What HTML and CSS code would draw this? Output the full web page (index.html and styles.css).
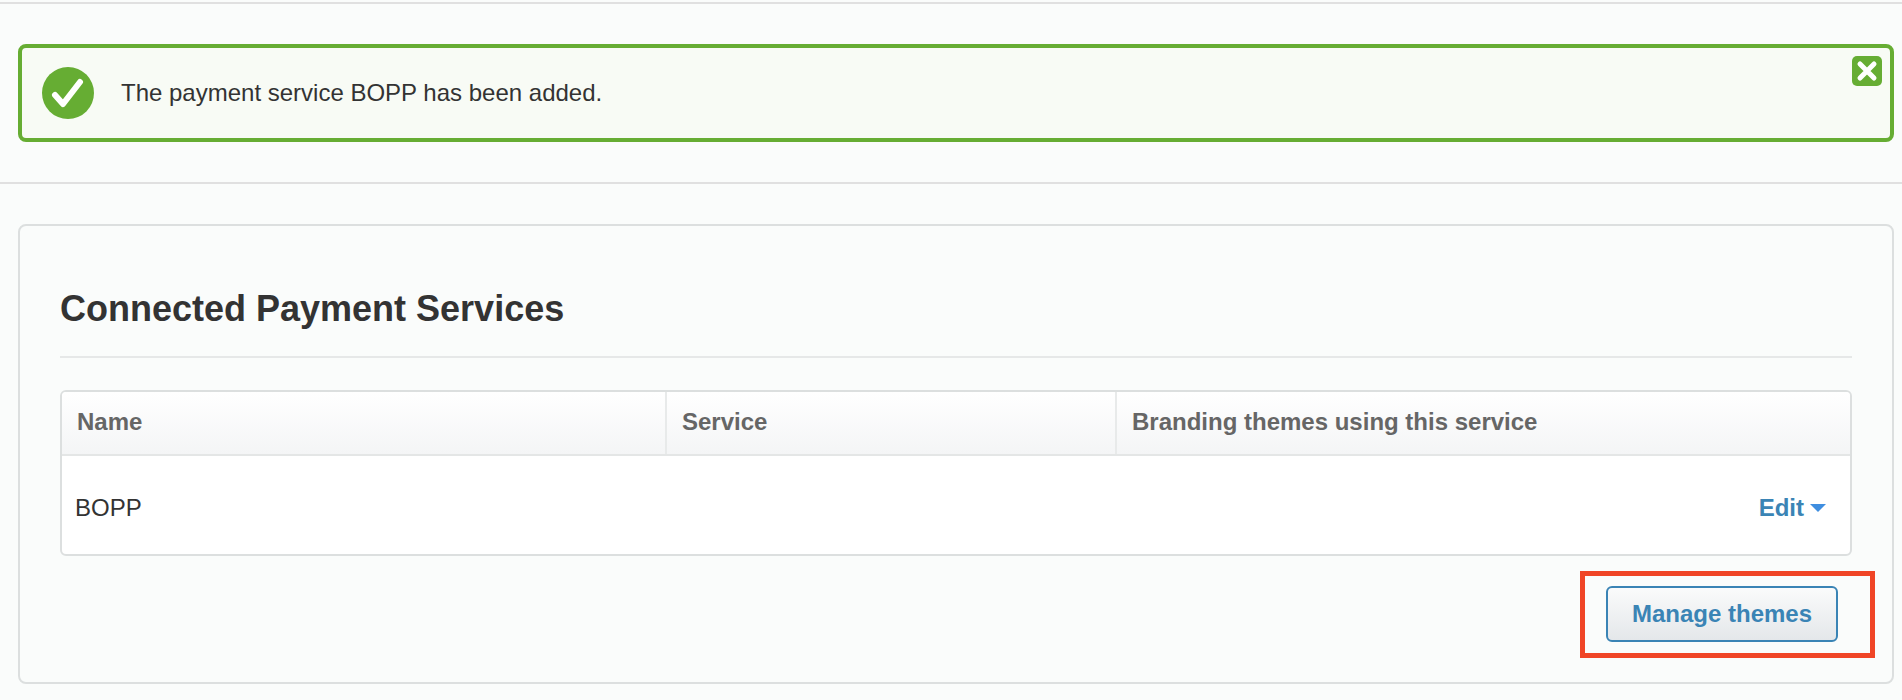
FILE: index.html
```html
<!DOCTYPE html>
<html lang="en">
<head>
<meta charset="utf-8">
<title>Connected Payment Services</title>
<link rel="stylesheet" href="styles.css">
</head>
<body>
<div class="page">
  <section class="notice-band">
    <div class="alert">
      <svg class="alert-icon" viewBox="0 0 52 52" aria-hidden="true">
        <circle cx="26" cy="26" r="26" fill="#66ad33"/>
        <path d="M13 28 L21 37 L38 15" fill="none" stroke="#fff" stroke-width="6" stroke-linecap="round" stroke-linejoin="round"/>
      </svg>
      <p class="alert-text">The payment service BOPP has been added.</p>
      <button class="alert-close" type="button" aria-label="Close">
        <svg viewBox="0 0 30 30" aria-hidden="true">
          <path d="M8 8 L22 22 M22 8 L8 22" stroke="#fff" stroke-width="5" stroke-linecap="round"/>
        </svg>
      </button>
    </div>
  </section>
  <section class="panel">
    <h2 class="panel-title">Connected Payment Services</h2>
    <div class="table">
      <div class="table-head">
        <div class="th">Name</div>
        <div class="th">Service</div>
        <div class="th">Branding themes using this service</div>
      </div>
      <div class="table-row">
        <span class="cell-name">BOPP</span>
        <a class="edit-link" href="#">Edit<span class="caret"></span></a>
      </div>
    </div>
    <div class="actions">
      <div class="highlight-wrap">
        <a class="btn" href="#">Manage themes</a>
        <span class="highlight"></span>
      </div>
    </div>
  </section>
</div>
</body>
</html>
```
FILE: styles.css
```css
* { box-sizing: border-box; }
html, body { margin: 0; padding: 0; height: 100%; }
body {
  background: #fafcfb;
  font-family: "Liberation Sans", Arial, sans-serif;
  color: #333;
  overflow: hidden;
}
.page { padding-top: 2px; }
.notice-band {
  border-top: 2px solid #e0e0e0;
  border-bottom: 2px solid #e0e0e0;
  padding: 40px 8px 40px 18px;
  height: 182px;
}
.alert {
  display: flex;
  align-items: center;
  position: relative;
  height: 98px;
  border: 4px solid #66ad33;
  border-radius: 8px;
  background: #f8fbf5;
  padding-left: 20px;
}
.alert-icon { width: 52px; height: 52px; flex: none; }
.alert-text { margin: 0 0 0 27px; font-size: 24px; color: #333; }
.alert-close {
  position: absolute;
  top: 8px;
  right: 8px;
  width: 30px;
  height: 30px;
  padding: 0;
  border: 0;
  border-radius: 5px;
  background: #66ad33;
}
.alert-close svg { display: block; width: 30px; height: 30px; }
.panel {
  margin: 40px 8px 0 18px;
  height: 460px;
  border: 2px solid #dcdfdf;
  border-radius: 8px;
  background: #fafcfb;
  padding: 0 40px 0 40px;
}
.panel-title {
  margin: 0;
  height: 132px;
  padding-top: 61px;
  font-size: 36px;
  line-height: 44px;
  color: #333;
  border-bottom: 2px solid #e6e8e8;
}
.table {
  margin-top: 32px;
  height: 166px;
  border: 2px solid #dcdfdf;
  border-radius: 6px;
  background: #fff;
  overflow: hidden;
}
.table-head {
  display: grid;
  grid-template-columns: 603px 450px 1fr;
  height: 64px;
  border-bottom: 2px solid #e4e6e6;
  background: linear-gradient(#fff, #f4f5f6);
}
.th {
  display: flex;
  align-items: center;
  padding: 0 0 2px 15px;
  font-size: 24px;
  font-weight: bold;
  color: #666;
  border-left: 2px solid #e8eaea;
}
.th:first-child { border-left: 0; }
.table-row {
  display: flex;
  align-items: center;
  justify-content: space-between;
  height: 98px;
  padding: 5px 24px 0 13px;
}
.cell-name { font-size: 24px; color: #333; }
.edit-link {
  display: flex;
  align-items: center;
  font-size: 24px;
  font-weight: bold;
  color: #3a84b5;
  text-decoration: none;
}
.caret {
  margin-left: 6px;
  width: 0;
  height: 0;
  border-left: 8px solid transparent;
  border-right: 8px solid transparent;
  border-top: 8px solid #3f8ee0;
}
.actions {
  display: flex;
  justify-content: flex-end;
  padding: 30px 14px 0 0;
}
.highlight-wrap { position: relative; }
.btn {
  display: flex;
  align-items: center;
  justify-content: center;
  width: 232px;
  height: 56px;
  border: 2px solid #3a84b5;
  border-radius: 6px;
  background: linear-gradient(#fafbfb, #e4e7ea);
  font-size: 24px;
  font-weight: bold;
  color: #3a84b5;
  text-decoration: none;
}
.highlight {
  position: absolute;
  left: -26px;
  top: -15px;
  width: 295px;
  height: 87px;
  border: 5px solid #f04526;
  pointer-events: none;
}
```
